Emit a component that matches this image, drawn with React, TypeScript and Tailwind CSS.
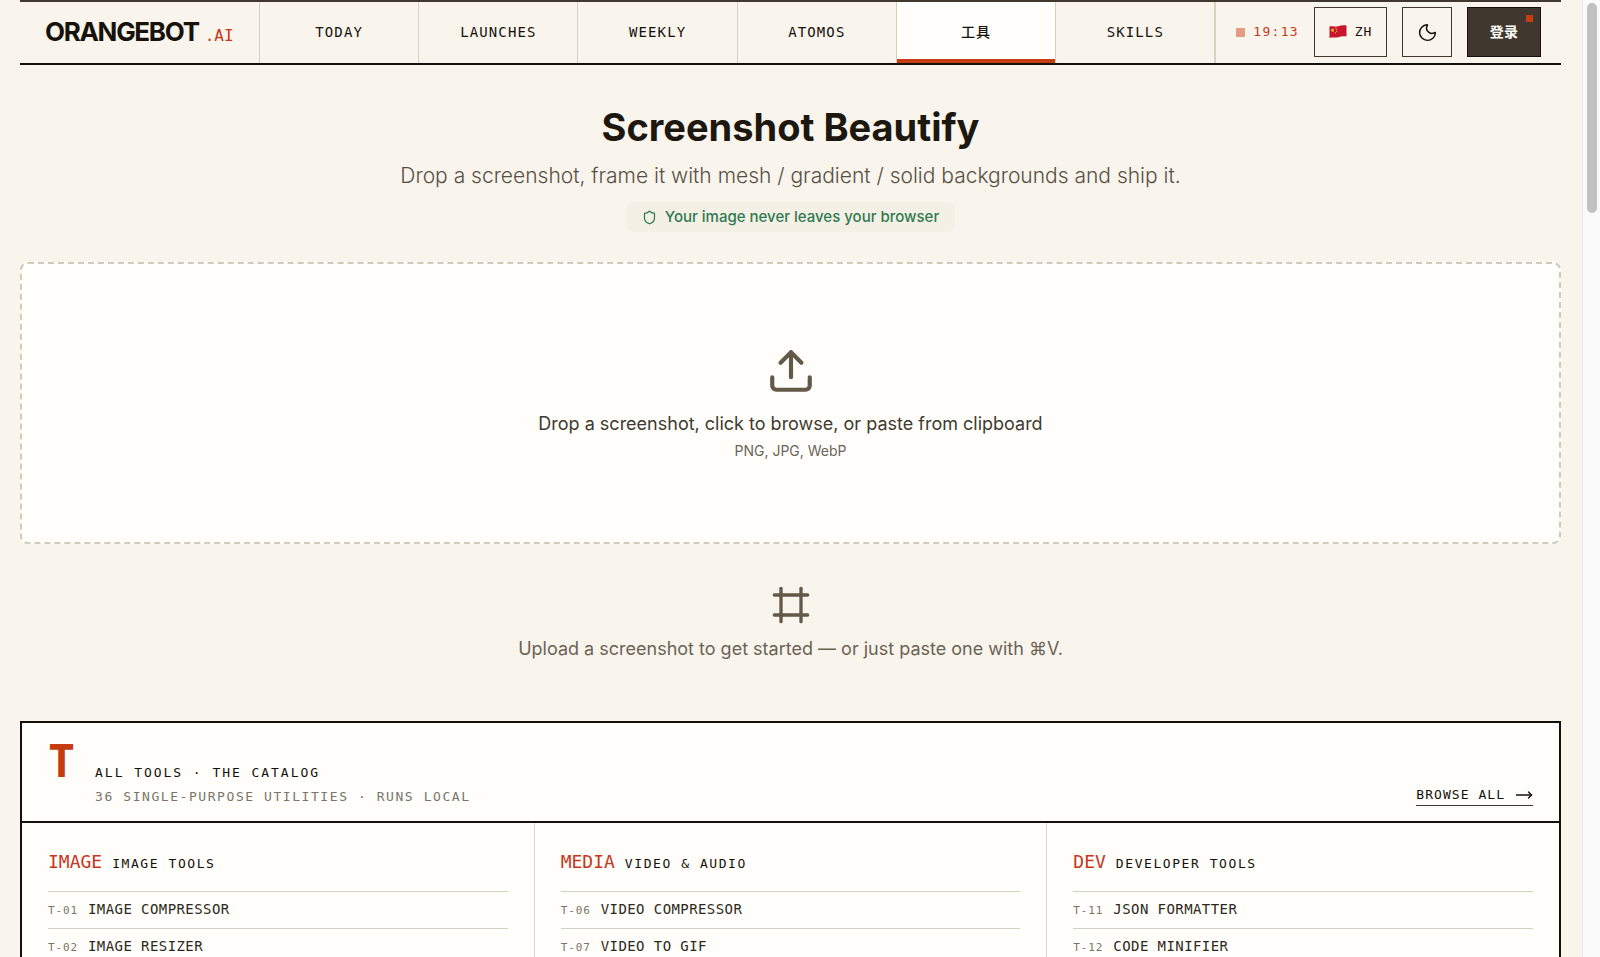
import React, { useState } from 'react';
import { Frame, Moon, MoveRight, Shield, Upload } from 'lucide-react';

interface Tool {
    id: string;
    name: string;
}

interface ToolGroup {
    code: string;
    title: string;
    tools: Tool[];
}

const navItems = ['TODAY', 'LAUNCHES', 'WEEKLY', 'ATOMOS', '工具', 'SKILLS'];

const toolGroups: ToolGroup[] = [
    {
        code: 'IMAGE',
        title: 'IMAGE TOOLS',
        tools: [
            { id: 'T-01', name: 'IMAGE COMPRESSOR' },
            { id: 'T-02', name: 'IMAGE RESIZER' },
        ],
    },
    {
        code: 'MEDIA',
        title: 'VIDEO & AUDIO',
        tools: [
            { id: 'T-06', name: 'VIDEO COMPRESSOR' },
            { id: 'T-07', name: 'VIDEO TO GIF' },
        ],
    },
    {
        code: 'DEV',
        title: 'DEVELOPER TOOLS',
        tools: [
            { id: 'T-11', name: 'JSON FORMATTER' },
            { id: 'T-12', name: 'CODE MINIFIER' },
        ],
    },
];

const FlagCN = () => (
    <svg width="18" height="14" viewBox="0 0 18 14" aria-hidden="true">
        <path d="M0.5 1.6C3.5 0.4 6 2 9 1.2S14.5 0 17.5 0.5V11.6C14.5 11 12 11.4 9 12.3S3.5 11.8 0.5 13Z" fill="#c8152d" />
        <path d="M3.6 3l.6 1.4 1.5.1-1.2 1 .4 1.5-1.3-.8-1.3.8.4-1.5-1.2-1 1.5-.1z" fill="#f7d038" />
        <circle cx="6.9" cy="2.9" r="0.6" fill="#f7d038" />
        <circle cx="7.8" cy="4.5" r="0.6" fill="#f7d038" />
        <circle cx="7.6" cy="6.3" r="0.6" fill="#f7d038" />
        <circle cx="6.4" cy="7.8" r="0.6" fill="#f7d038" />
    </svg>
);

const Header = ({ active, onSelect }: { active: string; onSelect: (item: string) => void }) => (
    <header className="flex h-[65px] border-t-2 border-b-2 border-t-[#40372e] border-b-[#14110c] font-['DejaVu_Sans_Mono','Noto_Sans_CJK_SC',monospace]">
        <a href="#" className="flex w-60 shrink-0 items-baseline gap-1.5 border-r border-[#d6d2c2] px-[25px] pt-3">
            <span className="font-['Inter','Liberation_Sans',sans-serif] text-[26px] leading-9 font-bold tracking-tighter text-[#17130c]">
                ORANGEBOT
            </span>
            <span className="text-base text-[#c8371a]">.AI</span>
        </a>

        <nav className="flex flex-1">
            {navItems.map((item) => (
                <a
                    key={item}
                    href="#"
                    onClick={() => onSelect(item)}
                    className={`flex flex-1 items-center justify-center border-r border-[#d6d2c2] pb-px text-sm leading-5 tracking-[0.08em] text-[#14110c] ${
                        item === active ? 'bg-[#fffefa] font-medium shadow-[inset_0_-4px_0_#c43c10]' : ''
                    }`}
                >
                    {item}
                </a>
            ))}
        </nav>

        <div className="flex shrink-0 items-center border-l border-[#d6d2c2] px-5 pb-px text-[13px]">
            <span className="mr-2 h-[9px] w-[9px] bg-[#e49b83]" />
            <time className="mr-[15px] tracking-widest text-[#c8371a]">19:13</time>
            <button className="mr-[15px] flex h-[50px] w-[73px] items-center justify-center gap-2 border border-[#40372e] tracking-[0.08em] text-[#14110c]">
                <FlagCN />
                ZH
            </button>
            <button aria-label="Dark mode" className="mr-[15px] flex h-[50px] w-[50px] items-center justify-center border border-[#40372e] text-[#14110c]">
                <Moon size={21} strokeWidth={1.7} />
            </button>
            <button className="relative h-[50px] w-[74px] border border-[#14110c] bg-[#40372e] text-sm font-bold tracking-wide text-[#fffefa]">
                登录
                <span className="absolute top-[7px] right-[7px] h-[7px] w-[7px] bg-[#c43c10]" />
            </button>
        </div>
    </header>
);

const ToolColumn = ({ group }: { group: ToolGroup }) => (
    <div className="flex-1 border-r border-[#d6d6ce] px-[26px] pt-[27px] pb-6 last:border-r-0">
        <h3 className="mb-[15px] flex items-baseline gap-[10px] leading-6">
            <span className="text-lg leading-6 text-[#c8371a]">{group.code}</span>
            <span className="text-[13px] font-medium tracking-[0.12em] text-[#14110c]">{group.title}</span>
        </h3>
        <ul>
            {group.tools.map((tool) => (
                <li key={tool.id} className="border-t border-[#d2d0c0]">
                    <a href="#" className="flex h-9 items-baseline gap-[10px] pt-[7px] leading-5">
                        <span className="text-[11px] tracking-[0.08em] text-[#7a756b]">{tool.id}</span>
                        <span className="text-sm tracking-[0.03em] text-[#2e2921]">{tool.name}</span>
                    </a>
                </li>
            ))}
        </ul>
    </div>
);

const App: React.FC = () => {
    const [active, setActive] = useState('工具');

    return (
        <div className="flex h-screen overflow-hidden bg-[#f9f4ec] font-['Inter','Liberation_Sans',sans-serif]">
            <div className="min-w-0 flex-1 pr-[21px] pl-5">
                <Header active={active} onSelect={setActive} />

                <main>
                    <section className="flex flex-col items-center pt-[38px] text-center">
                        <h1 className="text-[38px] leading-[48px] font-bold text-[#1d180f]">Screenshot Beautify</h1>
                        <p className="mt-[9px] text-[21px] leading-8 font-light text-[#575045]">
                            Drop a screenshot, frame it with mesh / gradient / solid backgrounds and ship it.
                        </p>
                        <div className="mt-[10px] flex h-[30px] items-center gap-2 rounded-lg bg-[#f4f0e5] px-4 text-[15px] font-medium text-[#2f7a50]">
                            <Shield size={15} strokeWidth={2} />
                            Your image never leaves your browser
                        </div>
                    </section>

                    <label className="mt-[30px] flex cursor-pointer flex-col items-center rounded-lg border-2 border-dashed border-[#d0ccba] bg-[#fffefa] pt-[82px] pb-[79px]">
                        <input type="file" accept="image/png,image/jpeg,image/webp" className="sr-only" />
                        <Upload size={50} className="text-[#625949]" />
                        <span className="mt-[14px] text-lg leading-7 text-[#403a30]">
                            Drop a screenshot, click to browse, or paste from clipboard
                        </span>
                        <span className="mt-px text-sm leading-6 text-[#6b6559]">PNG, JPG, WebP</span>
                    </label>

                    <div className="mt-[41px] flex flex-col items-center text-[#625949]">
                        <Frame size={40} />
                        <p className="mt-[10px] text-lg leading-7 text-[#6b6355]">
                            Upload a screenshot to get started — or just paste one with ⌘V.
                        </p>
                    </div>

                    <section className="mt-[58px] border-2 border-[#14110c] bg-[#fffefa] font-['DejaVu_Sans_Mono',monospace]">
                        <div className="flex items-end justify-between border-b-2 border-[#14110c] px-[26px] pt-4 pb-[14px]">
                            <div className="flex items-baseline gap-5">
                                <span className="text-[45px] leading-[45px] font-bold text-[#c43c10]">T</span>
                                <div className="text-[13px] leading-5">
                                    <h2 className="tracking-[0.15em] text-[#14110c]">ALL TOOLS · THE CATALOG</h2>
                                    <p className="mt-1 tracking-[0.12em] text-[#7a756b]">
                                        36 SINGLE-PURPOSE UTILITIES · RUNS LOCAL
                                    </p>
                                </div>
                            </div>
                            <a href="#" className="mb-px flex items-center gap-[10px] border-b border-[#40372e] text-[13px] leading-5 tracking-[0.08em] text-[#14110c]">
                                BROWSE ALL
                                <MoveRight size={18} strokeWidth={1.8} />
                            </a>
                        </div>
                        <div className="flex">
                            {toolGroups.map((group) => (
                                <ToolColumn key={group.code} group={group} />
                            ))}
                        </div>
                    </section>
                </main>
            </div>

            {/* page scroll track */}
            <div className="w-[18px] shrink-0 border-l border-[#e8e6e6] bg-[#fbfafa] px-1 pt-[3px]">
                <div className="h-[210px] w-[10px] rounded-full bg-[#c1c1c1]" />
            </div>
        </div>
    );
};

export default App;
